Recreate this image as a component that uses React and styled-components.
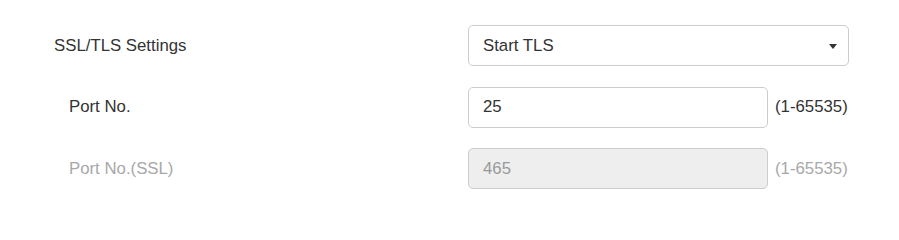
import React from 'react'
import styled, { createGlobalStyle } from 'styled-components'

const GlobalStyle = createGlobalStyle`
  body {
    margin: 0;
    background: #fff;
    font-family: "Liberation Sans", Arial, sans-serif;
    color: #333;
  }
`

const Form = styled.div`
  width: 899px;
  height: 225px;
  padding: 25px 0 0 54px;
  box-sizing: border-box;
  display: flex;
  flex-direction: column;
  gap: 20.5px;
`

const Row = styled.div`
  display: flex;
  align-items: center;
  height: 41px;
`

const Label = styled.div`
  width: 414px;
  box-sizing: border-box;
  padding-left: ${p => (p.$sub ? '15px' : '0')};
  font-size: 16.8px;
  color: ${p => (p.$disabled ? '#a8a8a8' : '#333')};
`

const Field = styled.div`
  width: ${p => p.$width}px;
  height: 41px;
  box-sizing: border-box;
  border: 1px solid #ccc;
  border-radius: 5px;
  background: ${p => (p.$disabled ? '#eee' : '#fff')};
  color: ${p => (p.$disabled ? '#999' : '#333')};
  font-size: 16.8px;
  display: flex;
  align-items: center;
  justify-content: space-between;
  padding: 0 11px 0 14px;
`

const Caret = styled.span`
  width: 0;
  height: 0;
  border-left: 4.5px solid transparent;
  border-right: 4.5px solid transparent;
  border-top: 5px solid #333;
  margin-top: 1px;
`

const Range = styled.span`
  margin-left: 7px;
  font-size: 16.8px;
  color: ${p => (p.$disabled ? '#a8a8a8' : '#333')};
`

export default function App() {
  return (
    <>
      <GlobalStyle />
      <Form>
        <Row>
          <Label>SSL/TLS Settings</Label>
          <Field $width={381}>
            <span>Start TLS</span>
            <Caret />
          </Field>
        </Row>
        <Row>
          <Label $sub>Port No.</Label>
          <Field $width={300}>25</Field>
          <Range>(1-65535)</Range>
        </Row>
        <Row>
          <Label $sub $disabled>Port No.(SSL)</Label>
          <Field $width={300} $disabled>465</Field>
          <Range $disabled>(1-65535)</Range>
        </Row>
      </Form>
    </>
  )
}
